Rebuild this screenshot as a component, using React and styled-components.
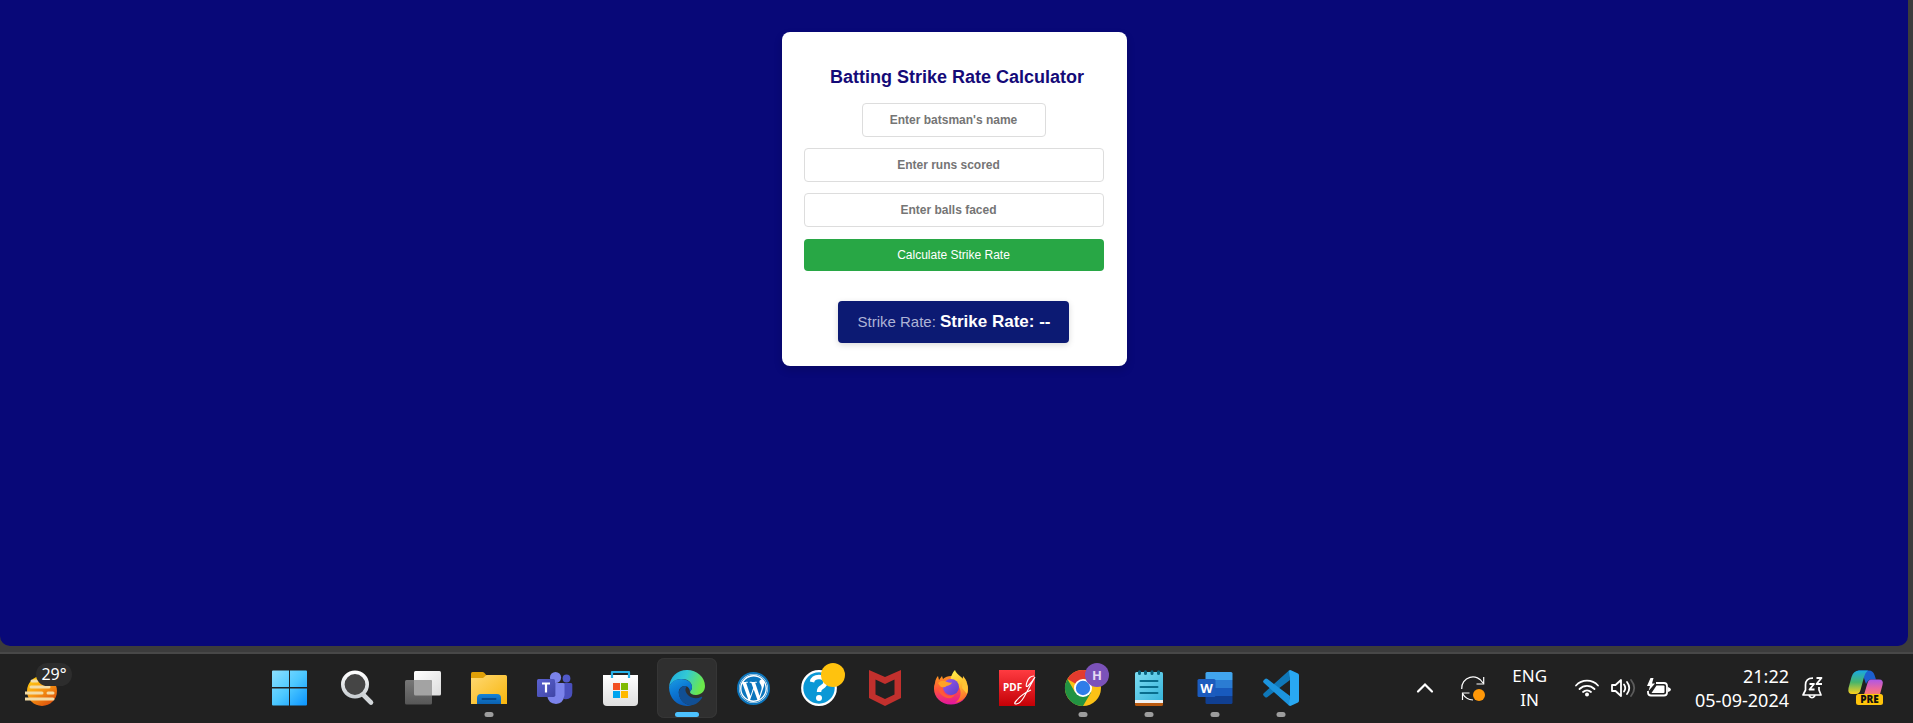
import React, { useState } from "react";
import styled, { createGlobalStyle, css } from "styled-components";
import { FaWordpress } from "react-icons/fa";

const Global = createGlobalStyle`
  * { box-sizing: border-box; }
  html, body, #root { height: 100%; }
  body { margin: 0; background: #3c3c3c; font-family: Arial, "Liberation Sans", sans-serif; overflow: hidden; }
`;

const Desktop = styled.div`
  display: flex;
  flex-direction: column;
  min-height: 100vh;
  background: #3c3c3c;
`;

const Browser = styled.main`
  flex: 1;
  display: flex;
  justify-content: center;
  align-items: flex-start;
  margin-right: 5px;
  padding: 32px 0;
  background: #080878;
  border-radius: 0 0 10px 10px;
`;

const Card = styled.form`
  display: flex;
  flex-direction: column;
  align-items: center;
  width: 345px;
  padding: 34px 23px 23px 22px;
  background: #fff;
  border-radius: 8px;
  box-shadow: 0 4px 8px rgba(0, 0, 0, 0.15);
`;

const Title = styled.h1`
  margin: 0 0 15px;
  padding-left: 7px;
  font-size: 18px;
  line-height: 22px;
  color: #140a78;
`;

const Field = styled.input`
  width: ${(p) => (p.$wide ? "100%" : "184px")};
  height: 34px;
  margin-bottom: 11px;
  padding: ${(p) => (p.$wide ? "0 18px 0 8px" : "0 8px")};
  border: 1px solid #ddd;
  border-radius: 4px;
  background: #fff;
  color: #222;
  font: bold 12px Arial, "Liberation Sans", sans-serif;
  text-align: center;
  appearance: textfield;
  &::placeholder { color: #757575; }
  &::-webkit-inner-spin-button { display: none; }
`;

const Submit = styled.button`
  width: 100%;
  height: 32px;
  margin-top: 1px;
  border: 0;
  border-radius: 4px;
  background: #28a745;
  color: #fff;
  font: 12px Arial, "Liberation Sans", sans-serif;
  cursor: pointer;
`;

const Result = styled.output`
  height: 42px;
  margin-top: 30px;
  padding: 0 18px 0 19px;
  border-radius: 4px;
  background: #0c1a73;
  box-shadow: 0 2px 6px rgba(0, 0, 0, 0.15);
  color: #aeb3d6;
  font-size: 15px;
  line-height: 42px;
  white-space: nowrap;
`;

const Value = styled.strong`
  color: #fff;
  font-size: 17px;
`;

const Taskbar = styled.footer`
  display: flex;
  height: 69px;
  margin-top: 6px;
  flex: none;
  box-sizing: content-box;
  border-top: 2px solid #484848;
  background: #212121;
  color: #fff;
  font-family: "Noto Sans", "Open Sans", sans-serif;
`;

const reset = css`
  border: 0;
  padding: 0;
  background: transparent;
  color: inherit;
  font: inherit;
  cursor: pointer;
`;

const Weather = styled.button`
  ${reset}
  position: relative;
  width: 49px;
  height: 48px;
  margin: 8px 187px 0 25px;
  svg { display: block; margin: 11px 0 0; }
`;

const Temp = styled.span`
  position: absolute;
  left: 11px;
  top: 1px;
  width: 36px;
  height: 23px;
  border-radius: 12px;
  background: #2d2d2d;
  font-size: 16px;
  line-height: 23px;
`;

const Apps = styled.nav`
  display: flex;
  gap: 6px;
  padding-top: 4px;
`;

const AppButton = styled.button`
  ${reset}
  position: relative;
  display: grid;
  place-items: center;
  width: 60px;
  height: 60px;
  border-radius: 7px;
  ${(p) => p.$active && css`background: #2f2f2f; box-shadow: inset 0 0 0 1px #363636;`}
  svg { display: block; overflow: visible; }
  &::after {
    content: "";
    display: ${(p) => (p.$running || p.$active ? "block" : "none")};
    position: absolute;
    bottom: 1px;
    left: 50%;
    width: ${(p) => (p.$active ? "24px" : "9px")};
    height: 5px;
    border-radius: 3px;
    background: ${(p) => (p.$active ? "#4cc2ff" : "#9d9d9d")};
    transform: translateX(-50%);
  }
`;

const Tray = styled.div`
  display: flex;
  align-items: center;
  height: 68px;
  margin-left: auto;
  padding-right: 29px;
`;

const TrayButton = styled.button`
  ${reset}
  display: flex;
  align-items: center;
  gap: ${(p) => p.$gap || 0}px;
  margin-right: ${(p) => p.$after || 0}px;
  text-align: ${(p) => p.$align || "center"};
  font-size: ${(p) => p.$size || 18}px;
  line-height: 24px;
  svg { display: block; overflow: visible; }
`;

const WordPressBadge = styled.span`
  display: grid;
  place-items: center;
  width: 33px;
  height: 33px;
  border-radius: 50%;
  border: 2px solid #0b75bd;
  background: #fff;
  color: #0b75bd;
  font-size: 29px;
`;

const Icon = ({ children, size = 36 }) => (
  <svg width={size} height={size} viewBox={`0 0 ${size} ${size}`} aria-hidden="true">{children}</svg>
);

const Grad = ({ id, from, mid, to, x2 = 1, y2 = 1 }) => (
  <linearGradient id={id} x1="0" y1="0" x2={x2} y2={y2}>
    <stop offset="0" stopColor={from} />
    {mid && <stop offset=".5" stopColor={mid} />}
    <stop offset="1" stopColor={to} />
  </linearGradient>
);

const WindowsIcon = () => (
  <Icon>
    <defs>
      <linearGradient id="win" gradientUnits="userSpaceOnUse" x1="0" y1="0" x2="35" y2="35">
        <stop offset="0" stopColor="#8be0ff" /><stop offset=".5" stopColor="#4cc8ff" /><stop offset="1" stopColor="#0a93ff" />
      </linearGradient>
    </defs>
    <path fill="url(#win)" d="M0 .5H16V17H-1V1.500Q-1 .5 0 .5ZM17 .5H33Q34 .5 34 1.500V17H17ZM-1 18.500H16V35.500H0Q-1 35.500 -1 34.500ZM17 18.500H34V34.500Q34 35.500 33 35.500H17Z" />
  </Icon>
);

const SearchIcon = () => (
  <Icon>
    <defs><Grad id="sr" from="#ffffff" to="#c9ced2" x2={0} /></defs>
    <path d="M23.500 24L32 32.500" stroke="#d3d7da" strokeWidth="4.600" strokeLinecap="round" />
    <circle cx="16" cy="14.500" r="12.200" fill="#454545" stroke="url(#sr)" strokeWidth="3.600" />
  </Icon>
);

const TaskViewIcon = () => (
  <Icon>
    <defs><Grad id="tv" from="#ffffff" to="#dcdcdc" /><Grad id="tw" from="#777777" to="#575757" x2={0} /></defs>
    <rect x="9" y="1" width="27" height="24.500" rx="1.500" fill="url(#tv)" />
    <rect x="0" y="10" width="27" height="24.500" rx="1.500" fill="url(#tw)" />
    <path d="M9 10H25.500Q27 10 27 11.500V25.500H10.500Q9 25.500 9 24Z" fill="#a3a3a3" />
  </Icon>
);

const FolderIcon = () => (
  <Icon>
    <defs><Grad id="fo" from="#ffd973" to="#f8b50c" /><Grad id="fb" from="#1583d8" to="#0b61b0" x2={0} /></defs>
    <path d="M0 3.500Q0 2 1.500 2H11.500Q12.500 2 13.500 3L16 6V12H0Z" fill="#e0a007" />
    <path d="M0 8H12L15.500 5H34.500Q36 5 36 6.500V34H0Z" fill="url(#fo)" />
    <path d="M6 34V28Q6 24 10 24H26Q30 24 30 28V34Z" fill="url(#fb)" />
    <path d="M11.500 29H24.500" stroke="#07498c" strokeWidth="2" strokeLinecap="round" />
  </Icon>
);

const TeamsIcon = () => (
  <Icon>
    <defs><Grad id="te" from="#5b62d1" to="#3f45a5" /></defs>
    <circle cx="29.500" cy="8.500" r="3.900" fill="#5059c9" />
    <path d="M24 13H34Q35.300 13 35.300 14.500V23Q35 30 27 29Z" fill="#4a50bd" />
    <circle cx="18.500" cy="7.500" r="5.600" fill="#7b83eb" />
    <path d="M11 13H26Q27.500 13 27.500 14.500V25Q26.500 33.500 19 34Q11 33.500 10 25Z" fill="#7b83eb" />
    <path d="M10 13H18.500V26H10Z" fill="#5158bb" />
    <rect x="0" y="9" width="18" height="18" rx="1.500" fill="url(#te)" />
    <path d="M5 13.500H13M9 13.500V22.500" stroke="#fff" strokeWidth="2.200" />
  </Icon>
);

const StoreIcon = () => (
  <Icon>
    <defs><Grad id="st" from="#ffffff" to="#dfdfdf" x2={0} /></defs>
    <path d="M0 5H35V32Q35 36 31 36H4Q0 36 0 32Z" fill="url(#st)" />
    <path d="M9 8V2H26V8" fill="none" stroke="#26b0e8" strokeWidth="2.200" strokeLinejoin="round" />
    <rect x="10" y="13" width="7" height="7" fill="#f25022" /><rect x="18" y="13" width="7" height="7" fill="#7fba00" />
    <rect x="10" y="21" width="7" height="7" fill="#00a4ef" /><rect x="18" y="21" width="7" height="7" fill="#ffb900" />
  </Icon>
);

const EdgeIcon = () => (
  <Icon>
    <defs>
      <Grad id="ea" from="#1ba7e0" mid="#33c9d4" to="#6be84b" y2={0.3} />
      <Grad id="eb" from="#1b9de2" mid="#0b78d4" to="#0b5cb8" x2={0.4} />
    </defs>
    <path d="M0 17C1 7 8 0 18 0C28 0 36 7 36 16C36 21.500 32 25 27 25C23 25 21 23.500 21 22C21 21 23 20.500 23 17C23 12 18 8.500 12 9C6 9.500 2 12.500 0 17Z" fill="url(#ea)" />
    <path d="M0 17C2 12 6 9 12 9C19 9 23 13 23 17C23 20 21 21 21 22C21 19 19 16 16 16C12 16 9 19 10 24C11 31 17 35.500 23 35.300C11 38.500 0 30 0 17Z" fill="url(#eb)" />
    <path d="M16 16C12 16 9 20 10 25C11.500 32 18 36 24 35C28 34 31 31 33 28C33.500 27 33 26.500 32 27C28 29 23 28.500 19.500 25.500C16 22.500 15.500 18.500 18 16.500Q17 16 16 16Z" fill="#114f94" />
  </Icon>
);

const WordPressIcon = () => <WordPressBadge><FaWordpress aria-hidden="true" /></WordPressBadge>;

const HelpIcon = () => (
  <Icon>
    <circle cx="18" cy="18" r="16.800" fill="#0a98d6" stroke="#fff" strokeWidth="2.200" />
    <path d="M11 12Q12 7 18 7Q24.500 7 24.500 12Q24.500 15 21 17Q18 18.500 18 22" fill="none" stroke="#fff" strokeWidth="4.400" />
    <circle cx="18" cy="28" r="3" fill="#fff" />
    <circle cx="32" cy="5" r="12" fill="#ffc20e" />
  </Icon>
);

const McAfeeIcon = () => (
  <Icon><path fillRule="evenodd" fill="#c2302d" d="M2 0L18 7L34 0V28L18 36L2 28ZM8.500 9.500V24.500L18 29L27.500 24.500V9.500L18 14Z" /></Icon>
);

const FirefoxIcon = () => (
  <Icon>
    <defs><Grad id="fx" from="#ff9a1f" mid="#ff503d" to="#e3189b" x2={0.1} /><Grad id="fy" from="#fff44f" mid="#ffc02f" to="#ff6a2c" x2={0.2} /><Grad id="fp" from="#9a56ee" to="#5a41c8" /></defs>
    <path d="M2 13C2 10 4 7 5 6L6 10L9 6L10 9C12 7 15 6 18 6C29 6 35 13 34.500 20C34 29 27 34.500 18 34.500C8 34.500 1 27 1 19Q1 15 2 13Z" fill="url(#fx)" />
    <path d="M22 0C23 5 33 8 35 17C36 26 30 31 22 33C28 29 29 22 26 17C23 12 16 12 18 7C19 4 20 2 22 0Z" fill="url(#fy)" />
    <path d="M30 6C34 10 36 17 34 24L29 18Z" fill="#ffc435" />
    <circle cx="18" cy="17" r="8" fill="url(#fp)" />
    <path d="M5 13Q9 9 14 12Q17 13 19 12.500Q18 15 13.500 16Q12 18 8 17Q6 15 5 13Z" fill="#ffa226" />
    <path d="M9 17C9 25 17 28 22 24C20 31 8 29 5 19Z" fill="#ff5a36" />
  </Icon>
);

const PdfIcon = () => (
  <Icon>
    <defs><Grad id="pd" from="#ff3b41" to="#c40006" x2={0} /></defs>
    <rect width="36" height="36" fill="url(#pd)" />
    <text x="4" y="21" fill="#fff" fontFamily="Open Sans, sans-serif" fontSize="10" fontWeight="700">PDF</text>
    <path d="M35 6Q30 6 28 12Q26 18 29 16Q33 12 36 7Q30 18 25 27Q21 34 17 34Q14 34 18 30Q23 24 32 20" fill="none" stroke="#fff" strokeWidth="1.100" />
  </Icon>
);

const ChromeIcon = () => (
  <Icon>
    <circle cx="18" cy="18" r="18" fill="#fbc116" />
    <path d="M18 18L2.400 9A18 18 0 0 1 33.600 9H18Z" fill="#e33b2e" />
    <path d="M2.400 9A18 18 0 0 0 18 36L26 22.500L18 18L10.200 22.500Z" fill="#229342" />
    <circle cx="18" cy="18" r="9" fill="#fff" /><circle cx="18" cy="18" r="7.200" fill="#2f7de9" />
    <circle cx="32" cy="5" r="12" fill="#7b52b9" />
    <text x="32" y="9.500" textAnchor="middle" fill="#e4d8f3" fontFamily="Open Sans, sans-serif" fontSize="13" fontWeight="700">H</text>
  </Icon>
);

const NotepadIcon = () => (
  <Icon>
    <defs><Grad id="np" from="#7ddcf2" to="#37b5db" /></defs>
    <path d="M4 30H32V34.500Q32 36 30.500 36H5.500Q4 36 4 34.500Z" fill="#b8590f" />
    <path d="M4 29H32V33H4Z" fill="#f1f1f1" />
    <path d="M4 3.500Q4 2 5.500 2H30.500Q32 2 32 3.500V30H4Z" fill="url(#np)" />
    <path d="M9.500 11H26.500M9.500 17H26.500M9.500 23H26.500" stroke="#086d8d" strokeWidth="2" strokeLinecap="round" />
    <path d="M8.500 1.800V3.500M14.500 1.800V3.500M21 1.800V3.500M27.500 1.800V3.500" stroke="#086480" strokeWidth="3" strokeLinecap="round" />
  </Icon>
);

const WordIcon = () => (
  <Icon>
    <path d="M8.500 10V3.500Q8.500 2 10 2H34Q35.500 2 35.500 3.500V10Z" fill="#41a5ee" />
    <path d="M8.500 10H35.500V18H8.500Z" fill="#2b7cd3" /><path d="M8.500 18H35.500V26H8.500Z" fill="#185abd" />
    <path d="M8.500 26H35.500V32.500Q35.500 34 34 34H10Q8.500 34 8.500 32.500Z" fill="#103f91" />
    <rect x=".5" y="9" width="18" height="18" rx="1.500" fill="#1b5bbe" />
    <text x="9.500" y="22.500" textAnchor="middle" fill="#fff" fontFamily="Open Sans, sans-serif" fontSize="13" fontWeight="700">W</text>
  </Icon>
);

const CodeIcon = () => (
  <Icon>
    <path fillRule="evenodd" d="M26 .5Q27 -.3 28.500 .4L35 3.500Q36 4 36 5.500V30.500Q36 32 35 32.500L28.500 35.600Q27 36.300 26 35.500L25 34L27 26V10L25 2Z" fill="#29a8f2" />
    <path d="M26 .5L27 10L4.500 27Q3 28 2 27L.5 25.500Q-.5 24 1 23Z" fill="#0f77b8" />
    <path d="M26 35.500L27 26L4.500 9Q3 8 2 9L.5 10.500Q-.5 12 1 13Z" fill="#1c94de" />
  </Icon>
);

const WeatherIcon = () => (
  <svg width="34" height="32" viewBox="0 0 34 32" aria-hidden="true">
    <defs><Grad id="sun" from="#ffd80c" mid="#f99d13" to="#dc520d" x2={0.7} /></defs>
    <circle cx="17" cy="15" r="15" fill="url(#sun)" />
    <path d="M7 5H12M6 11H24M0 17H17M23 17H28M0 23H28" stroke="#f3dca6" strokeWidth="3" strokeLinecap="round" />
  </svg>
);

const ChevronIcon = () => (
  <svg width="16" height="10" viewBox="0 0 16 10" aria-hidden="true"><path d="M1 8.500L8 1.500L15 8.500" fill="none" stroke="#fff" strokeWidth="2.200" strokeLinecap="round" /></svg>
);

const SyncIcon = () => (
  <svg width="24" height="25" viewBox="0 0 24 25" fill="none" stroke="#fff" strokeWidth="1.200" aria-hidden="true">
    <path d="M.7 13A11.300 11.300 0 0 1 22 7M22.700 1V8H15.500M1.500 24V17H8.500M1.500 17.500Q5 23.500 12 24" />
    <circle cx="18" cy="19" r="6" fill="#ff9808" stroke="none" />
  </svg>
);

const WifiIcon = () => (
  <svg width="24" height="18" viewBox="0 0 24 18" fill="none" stroke="#fff" strokeWidth="1.800" strokeLinecap="round" aria-hidden="true">
    <path d="M1 6.500A15 15 0 0 1 23 6.500M4.500 10A10.500 10.500 0 0 1 19.500 10M8 13A6 6 0 0 1 16 13" /><circle cx="12" cy="15.500" r="2" fill="#fff" stroke="none" />
  </svg>
);

const VolumeIcon = () => (
  <svg width="24" height="20" viewBox="0 0 24 20" fill="none" stroke="#fff" strokeWidth="1.800" strokeLinecap="round" strokeLinejoin="round" aria-hidden="true">
    <path d="M1 7H4.500L10 2V18L4.500 13H1ZM13 6.500Q15.500 10 13 13.500M16 4Q20.500 10 16 16" /><path d="M20 2Q26.500 10 20 18" stroke="#5c5c5c" />
  </svg>
);

const BatteryIcon = () => (
  <svg width="24" height="20" viewBox="0 0 24 20" aria-hidden="true">
    <path d="M9 5H17Q20 5 20 8V14.500Q20 17.500 17 17.500H4Q1 17.500 1 14.500V13" fill="none" stroke="#fff" strokeWidth="1.800" />
    <path d="M9.500 7.500H16.500Q17.500 7.500 17.500 8.500V14Q17.500 15 16.500 15H4.500Z" fill="#fff" /><path d="M21 9V14Q24 13 24 11.500T21 9Z" fill="#fff" />
    <path d="M3.500 0L0 8H3L1.500 13L8 5.500H5L6.500 0Z" fill="#fff" />
  </svg>
);

const BellIcon = () => (
  <svg width="21" height="22" viewBox="0 0 21 22" fill="none" stroke="#fff" strokeWidth="1.700" strokeLinejoin="round" aria-hidden="true">
    <path d="M11 1.200Q3.500 1 3.500 8V13L1 18H19L17 13V10M7 18.500Q10 23 13 18.500" />
    <path d="M7.500 7H12L7.500 12.500H12.500M14.500 1H19.500L14.500 7H20" strokeWidth="1.800" />
  </svg>
);

const CopilotIcon = () => (
  <svg width="36" height="36" viewBox="0 0 36 36" aria-hidden="true">
    <defs><Grad id="ca" from="#19a8e4" mid="#48b56b" to="#ffd21c" x2={0} /><Grad id="cb" from="#ad57e8" mid="#ec679d" to="#ff8b50" x2={0} /></defs>
    <path d="M10 .5H21Q25 .5 26.500 5L28 9.500H23Q20 9.500 18 14L16 8Z" fill="#1c5fd0" />
    <path d="M11 .5H20Q17 2.500 16 7L12.500 20Q11.500 24 8 24H4Q-.5 24 .5 18L3.500 7Q5.500 .5 11 .5Z" fill="url(#ca)" />
    <path d="M23 9.500H31Q36 9.500 34.500 15L31 28H12Q15.500 27 16.500 23L19.500 13Q20.500 9.500 23 9.500Z" fill="url(#cb)" />
    <rect x="8" y="24" width="27" height="11" rx="2.500" fill="#ffc40b" />
    <text x="21.500" y="33" textAnchor="middle" fill="#111" fontFamily="Open Sans, sans-serif" fontSize="10" fontWeight="800">PRE</text>
  </svg>
);

const apps = [
  ["Start", WindowsIcon], ["Search", SearchIcon], ["Task view", TaskViewIcon], ["File Explorer", FolderIcon, "running"],
  ["Teams", TeamsIcon], ["Store", StoreIcon], ["Edge", EdgeIcon, "active"], ["WordPress", WordPressIcon],
  ["Help", HelpIcon], ["McAfee", McAfeeIcon], ["Firefox", FirefoxIcon], ["PDF", PdfIcon],
  ["Chrome", ChromeIcon, "running"], ["Notepad", NotepadIcon, "running"], ["Word", WordIcon, "running"], ["VS Code", CodeIcon, "running"],
];

export default function App() {
  const [name, setName] = useState("");
  const [runs, setRuns] = useState("");
  const [balls, setBalls] = useState("");
  const [rate, setRate] = useState("--");
  const submit = (e) => {
    e.preventDefault();
    setRate(Number(balls) > 0 ? ((Number(runs) / Number(balls)) * 100).toFixed(2) : "--");
  };
  return (
    <Desktop>
      <Global />
      <Browser>
        <Card onSubmit={submit}>
          <Title>Batting Strike Rate Calculator</Title>
          <Field aria-label="Batsman's name" placeholder="Enter batsman's name" value={name} onChange={(e) => setName(e.target.value)} />
          <Field $wide type="number" aria-label="Runs scored" placeholder="Enter runs scored" value={runs} onChange={(e) => setRuns(e.target.value)} />
          <Field $wide type="number" aria-label="Balls faced" placeholder="Enter balls faced" value={balls} onChange={(e) => setBalls(e.target.value)} />
          <Submit type="submit">Calculate Strike Rate</Submit>
          <Result>Strike Rate: <Value>Strike Rate: {rate}</Value></Result>
        </Card>
      </Browser>
      <Taskbar>
        <Weather aria-label="Weather"><WeatherIcon /><Temp>29°</Temp></Weather>
        <Apps>
          {apps.map(([label, Glyph, state]) => (
            <AppButton key={label} aria-label={label} $running={state === "running"} $active={state === "active"}><Glyph /></AppButton>
          ))}
        </Apps>
        <Tray>
          <TrayButton $after={28} aria-label="Show hidden icons"><ChevronIcon /></TrayButton>
          <TrayButton $after={27} aria-label="Updates"><SyncIcon /></TrayButton>
          <TrayButton $after={28} $size={17}>ENG<br />IN</TrayButton>
          <TrayButton $after={24} $gap={12} aria-label="Network, volume and battery"><WifiIcon /><VolumeIcon /><BatteryIcon /></TrayButton>
          <TrayButton $after={13} $align="right"><time dateTime="2024-09-05T21:22">21:22<br />05-09-2024</time></TrayButton>
          <TrayButton $after={25} aria-label="Notifications"><BellIcon /></TrayButton>
          <TrayButton aria-label="Copilot"><CopilotIcon /></TrayButton>
        </Tray>
      </Taskbar>
    </Desktop>
  );
}
